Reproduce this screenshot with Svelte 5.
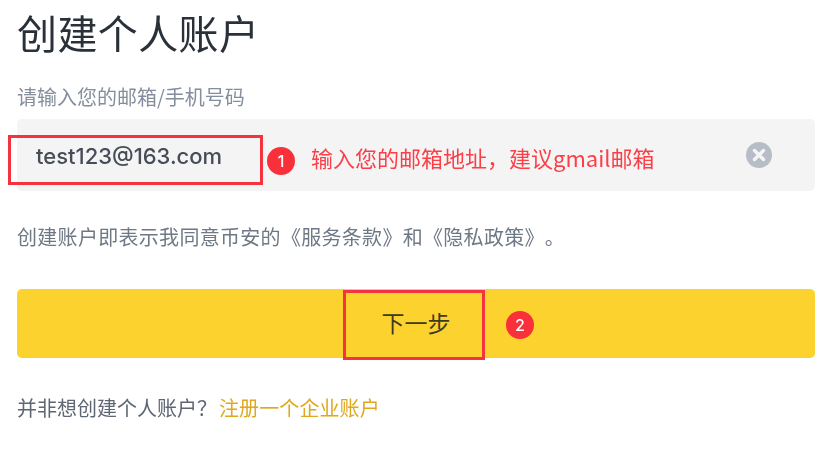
<script>
    let email = 'test123@163.com';
</script>

<div class="page">
    <h1>创建个人账户</h1>
    <div class="label">请输入您的邮箱/手机号码</div>

    <div class="field">
        <span class="value">{email}</span>
        <svg class="clear" viewBox="0 0 26 26" width="26" height="26">
            <circle cx="13" cy="13" r="13" fill="#b7bdc6" />
            <path d="M8.5 8.5l9 9M17.5 8.5l-9 9" stroke="#f5f5f5" stroke-width="3.4" stroke-linecap="round" />
        </svg>
        <div class="mark mark-email"></div>
        <div class="badge badge-email">1</div>
        <div class="note">输入您的邮箱地址{'\uFF0C'}建议gmail邮箱</div>
    </div>

    <p class="terms">创建账户即表示我同意币安的《服务条款》和《隐私政策》。</p>

    <div class="next">
        下一步
        <div class="mark mark-next"></div>
        <div class="badge badge-next">2</div>
    </div>

    <p class="foot">并非想创建个人账户{'\uFF1F'}<span class="link">注册一个企业账户</span></p>
</div>

<style>
    :global(body) {
        background: #fff;
    }

    .page {
        width: 832px;
        height: 457px;
        box-sizing: border-box;
        padding: 8px 17px 0;
        overflow: hidden;
        font-family: "Noto Sans CJK SC", "Inter", sans-serif;
        text-spacing-trim: space-all;
        filter: blur(0.55px);
    }

    h1 {
        margin: 0;
        font-size: 40px;
        line-height: 48px;
        letter-spacing: 0.4px;
        font-weight: 400;
        color: #2b3139;
    }

    .label {
        margin-top: 29px;
        font-size: 20px;
        line-height: 24px;
        color: #848e9c;
    }

    .field {
        position: relative;
        margin-top: 10px;
        width: 798px;
        height: 72px;
        background: #f4f4f5;
        border-radius: 5px;
    }

    .value {
        position: absolute;
        left: 19px;
        top: 23px;
        font-family: "Inter", sans-serif;
        font-size: 22px;
        line-height: 28px;
        font-weight: 500;
        color: #474d57;
    }

    .clear {
        position: absolute;
        left: 729px;
        top: 23px;
    }

    .mark {
        position: absolute;
        box-sizing: border-box;
        border: 3px solid #f5333f;
    }

    .mark-email {
        left: -9px;
        top: 16px;
        width: 255px;
        height: 50px;
    }

    .badge {
        position: absolute;
        width: 28px;
        height: 28px;
        border-radius: 50%;
        background: #f9303a;
        color: #fff;
        font-family: "Inter", sans-serif;
        font-size: 16px;
        font-weight: 500;
        line-height: 28px;
        text-align: center;
    }

    .badge-email {
        left: 250px;
        top: 28px;
    }

    .note {
        position: absolute;
        left: 294px;
        top: 22px;
        font-size: 22px;
        line-height: 32px;
        color: #fb3f47;
        white-space: nowrap;
    }

    .terms {
        margin: 33px 0 0;
        font-size: 20px;
        line-height: 26px;
        letter-spacing: 0.3px;
        color: #6f7885;
    }

    .next {
        position: relative;
        margin-top: 39px;
        width: 798px;
        height: 69px;
        background: #fcd22f;
        border-radius: 5px;
        font-size: 23px;
        line-height: 67px;
        text-align: center;
        color: #3d3a20;
    }

    .mark-next {
        left: 326px;
        top: 1px;
        width: 142px;
        height: 70px;
    }

    .badge-next {
        left: 489px;
        top: 22px;
    }

    .foot {
        margin: 37px 0 0;
        font-size: 20px;
        line-height: 26px;
        color: #5e6673;
    }

    .link {
        margin-left: 2px;
        letter-spacing: 0.1px;
        color: #dfa81f;
    }
</style>
